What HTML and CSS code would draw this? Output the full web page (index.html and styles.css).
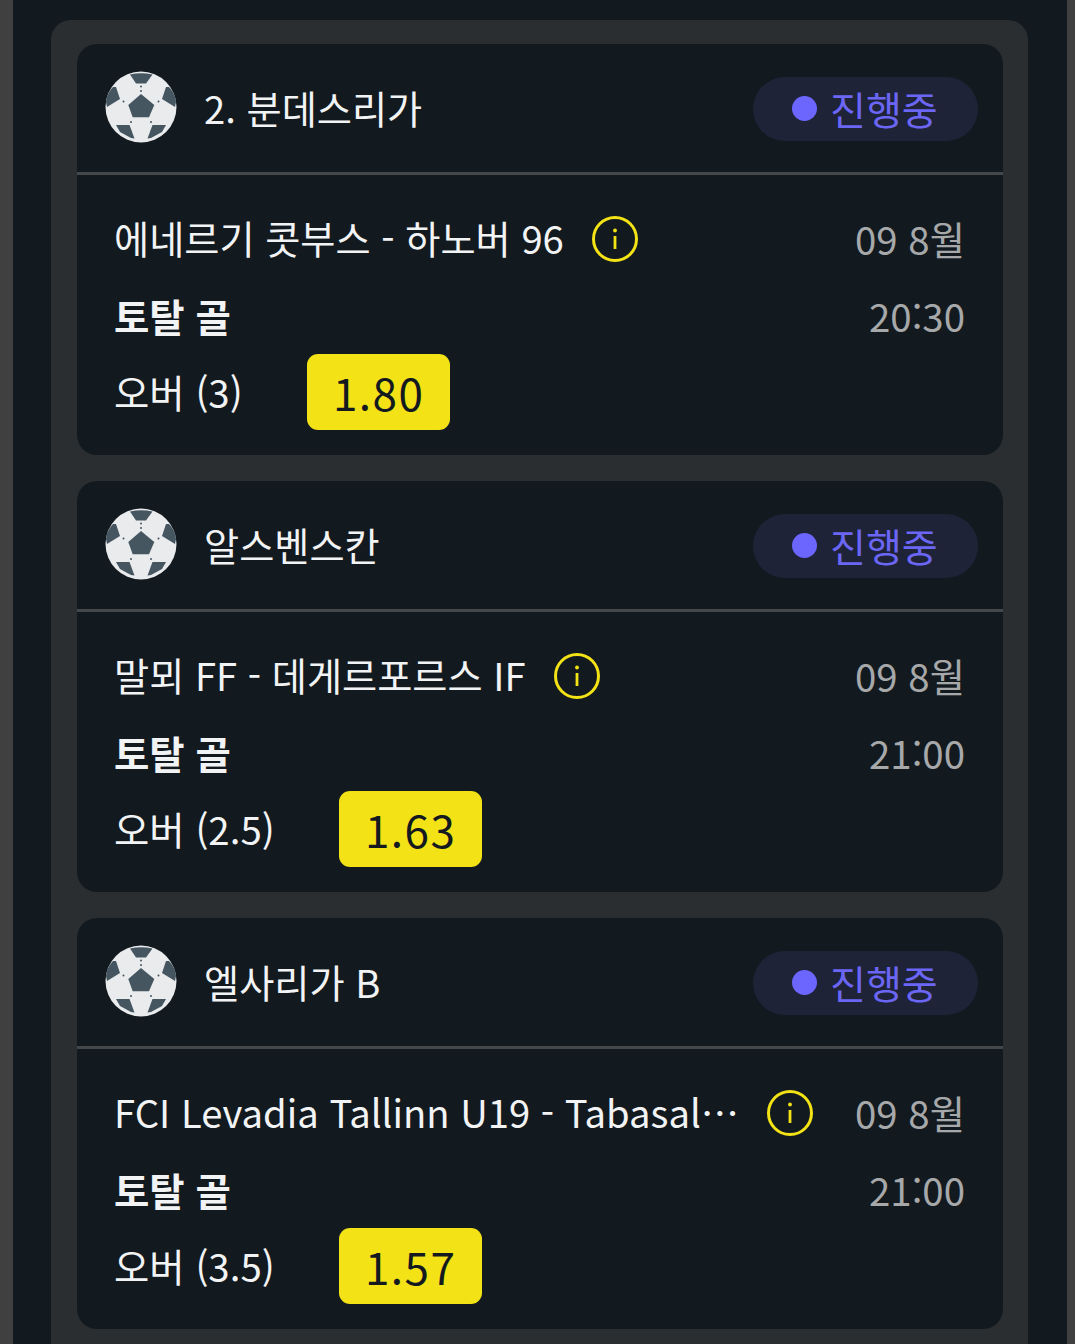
FILE: index.html
```html
<!DOCTYPE html>
<html lang="ko">
<head>
    <meta charset="UTF-8">
    <meta name="viewport" content="width=device-width, initial-scale=1.0">
    <title>진행중 경기</title>
    <link rel="stylesheet" href="styles.css">
</head>
<body>
    <svg class="icon-defs" width="0" height="0">
        <defs>
            <symbol id="ball" viewBox="0 0 72 72">
                <circle cx="36" cy="36" r="35.5" fill="#e9ebed"/>
                <g fill="#455661">
                    <path d="M36 23 49.3 34 44 46.3H27.7L23.3 34Z"/>
                    <path d="M25 3.5Q36 .8 47.5 3.5L41 12.5H31Z"/>
                    <path d="M8 16H11L15 28 2 36Q.2 31 1.5 27 4 20 8 16Z"/>
                    <path d="M64 16H61L57 28 70 36Q71.8 31 70.5 27 68 20 64 16Z"/>
                    <path d="M11 54H24.5L29.5 67.5 26 67 15 61Z"/>
                    <path d="M61 54H47.5L42.5 67.5 46 67 57 61Z"/>
                    <circle cx="36" cy="15.5" r="1"/>
                    <circle cx="36" cy="20" r="1"/>
                    <circle cx="18.5" cy="30.5" r="1"/>
                    <circle cx="53.5" cy="30.5" r="1"/>
                    <circle cx="26" cy="51" r="1"/>
                    <circle cx="46" cy="51" r="1"/>
                </g>
            </symbol>
            <symbol id="info" viewBox="0 0 46 46">
                <circle cx="23" cy="23" r="21.5" fill="none" stroke="#f2e216" stroke-width="3"/>
                <rect x="21.6" y="20" width="2.8" height="13" fill="#f2e216"/>
                <circle cx="23" cy="14.5" r="1.9" fill="#f2e216"/>
            </symbol>
        </defs>
    </svg>

    <div class="frame">
        <div class="panel">

            <section class="card">
                <header class="card-head">
                    <svg class="ball"><use href="#ball"/></svg>
                    <span class="league">2. 분데스리가</span>
                    <span class="status"><i class="dot"></i>진행중</span>
                </header>
                <div class="card-body">
                    <div class="row">
                        <span class="teams"><span class="team-name">에네르기 콧부스 - 하노버 96</span><svg class="info"><use href="#info"/></svg></span>
                        <span class="when when-date">09 8월</span>
                    </div>
                    <div class="row">
                        <span class="market">토탈 골</span>
                        <span class="when">20:30</span>
                    </div>
                    <div class="pick">
                        <span class="pick-label">오버 (3)</span>
                        <span class="odds">1.80</span>
                    </div>
                </div>
            </section>

            <section class="card">
                <header class="card-head">
                    <svg class="ball"><use href="#ball"/></svg>
                    <span class="league">알스벤스칸</span>
                    <span class="status"><i class="dot"></i>진행중</span>
                </header>
                <div class="card-body">
                    <div class="row">
                        <span class="teams"><span class="team-name">말뫼 FF - 데게르포르스 IF</span><svg class="info"><use href="#info"/></svg></span>
                        <span class="when when-date">09 8월</span>
                    </div>
                    <div class="row">
                        <span class="market">토탈 골</span>
                        <span class="when">21:00</span>
                    </div>
                    <div class="pick">
                        <span class="pick-label">오버 (2.5)</span>
                        <span class="odds">1.63</span>
                    </div>
                </div>
            </section>

            <section class="card">
                <header class="card-head">
                    <svg class="ball"><use href="#ball"/></svg>
                    <span class="league">엘사리가 B</span>
                    <span class="status"><i class="dot"></i>진행중</span>
                </header>
                <div class="card-body">
                    <div class="row">
                        <span class="teams"><span class="team-name">FCI Levadia Tallinn U19 - Tabasal…</span><svg class="info"><use href="#info"/></svg></span>
                        <span class="when when-date">09 8월</span>
                    </div>
                    <div class="row">
                        <span class="market">토탈 골</span>
                        <span class="when">21:00</span>
                    </div>
                    <div class="pick">
                        <span class="pick-label">오버 (3.5)</span>
                        <span class="odds">1.57</span>
                    </div>
                </div>
            </section>

        </div>
    </div>
</body>
</html>
```

FILE: styles.css
```css
* {
    box-sizing: border-box;
}

html, body {
    height: 100%;
}

body {
    margin: 0;
    background-color: #404040;
    font-family: "Noto Sans CJK KR", "Noto Sans", sans-serif;
    font-weight: 400;
    color: #f2f3f4;
    overflow: hidden;
}

.icon-defs {
    position: absolute;
}

.frame {
    margin: 0 8px 0 13px;
    height: 100%;
    padding: 20px 39px 0 38px;
    background-color: #131a1f;
}

.panel {
    display: flex;
    flex-direction: column;
    gap: 26px;
    padding: 24px 25px 0 26px;
    background-color: #2a2e31;
    border-radius: 20px 20px 0 0;
    min-height: 100%;
}

.card {
    flex: none;
    height: 411px;
    background-color: #131a1f;
    border-radius: 20px;
    overflow: hidden;
}

.card-head {
    display: flex;
    align-items: center;
    height: 131px;
    padding: 0 25px 3px 28px;
    border-bottom: 3px solid #45484b;
}

.ball {
    flex: none;
    width: 72px;
    height: 72px;
}

.league {
    flex: 1;
    margin-left: 27px;
    padding-top: 4px;
    font-size: 38.2px;
    line-height: 1;
    white-space: nowrap;
}

.status {
    display: flex;
    align-items: center;
    flex: none;
    width: 225px;
    height: 64px;
    margin-top: 4px;
    padding: 0 0 2px 39px;
    border-radius: 32px;
    background-color: #1e2338;
    color: #6c66f5;
    font-size: 39px;
}

.dot {
    width: 25px;
    height: 25px;
    margin: 2px 13px 0 0;
    border-radius: 50%;
    background-color: #6c66ff;
}

.card-body {
    padding: 41px 38px 0 37px;
}

.row {
    display: flex;
    align-items: center;
    justify-content: space-between;
    height: 46px;
    margin-bottom: 30px;
}

.teams {
    display: flex;
    align-items: center;
    min-width: 0;
}

.team-name {
    padding-bottom: 2px;
    font-size: 38.2px;
    line-height: 46px;
    white-space: nowrap;
}

.info {
    flex: none;
    width: 46px;
    height: 46px;
    margin-left: 28px;
}

.when {
    flex: none;
    font-size: 38.4px;
    line-height: 46px;
    color: #a6a8aa;
}

.when-date {
    padding-bottom: 2px;
}

.market {
    font-size: 38.4px;
    line-height: 46px;
    font-weight: 700;
}

.pick {
    display: flex;
    align-items: center;
    margin-top: -14px;
}

.pick-label {
    padding-bottom: 3px;
    font-size: 38.4px;
    line-height: 46px;
}

.odds {
    display: flex;
    align-items: center;
    justify-content: center;
    width: 143px;
    height: 76px;
    margin-left: 64.5px;
    padding-bottom: 1px;
    border-radius: 11px;
    background-color: #f2e216;
    color: #13191e;
    font-size: 44px;
    letter-spacing: 1.5px;
}
```
